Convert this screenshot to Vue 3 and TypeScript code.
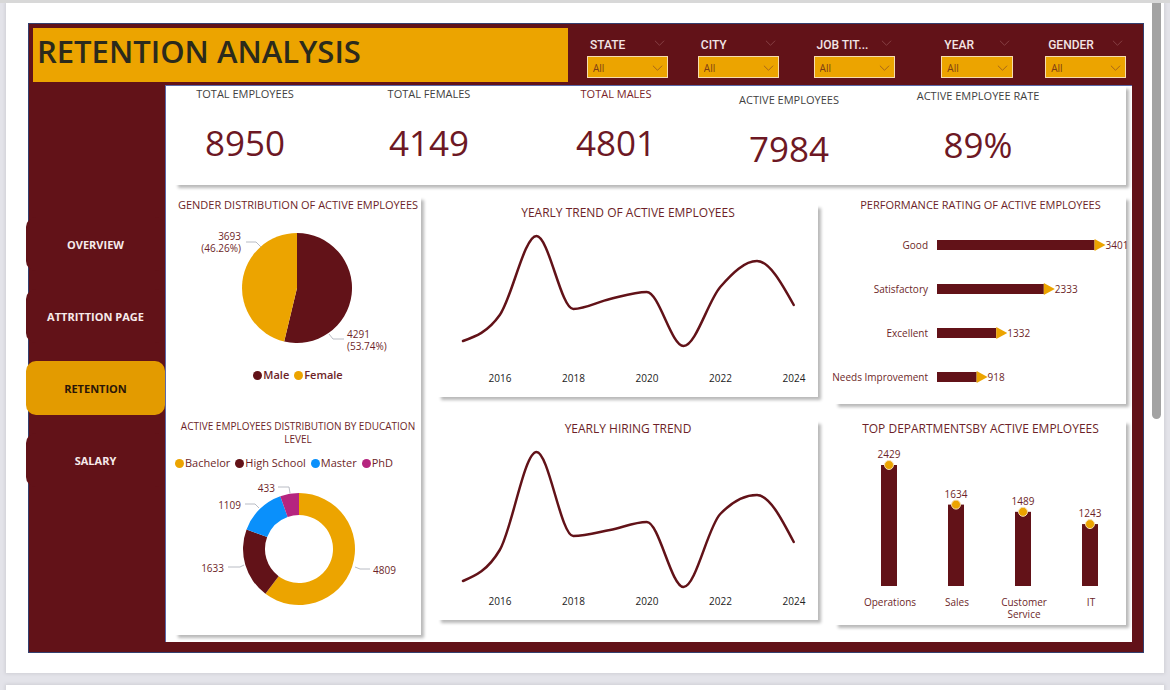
<script setup lang="ts">
import { ref } from 'vue'

interface Filter { id: string; label: string; narrow?: boolean }
interface Kpi { label: string; value: string; tone?: string; place?: string }
interface Slice { label: string; value: number; color: string }
interface Point { x: number; y: number }

const MAROON = '#621218'
const AMBER = '#eca400'

const filters: Filter[] = [
  { id: 'state', label: 'STATE' },
  { id: 'city', label: 'CITY' },
  { id: 'job', label: 'JOB TIT...' },
  { id: 'year', label: 'YEAR', narrow: true },
  { id: 'gender', label: 'GENDER' },
]

const pages = ['OVERVIEW', 'ATTRITTION PAGE', 'RETENTION', 'SALARY']
const current = ref('RETENTION')

const kpis: Kpi[] = [
  { label: 'TOTAL EMPLOYEES', value: '8950' },
  { label: 'TOTAL FEMALES', value: '4149' },
  { label: 'TOTAL MALES', value: '4801', tone: 'maroon' },
  { label: 'ACTIVE EMPLOYEES', value: '7984', place: 'low' },
  { label: 'ACTIVE EMPLOYEE RATE', value: '89%', place: 'lower' },
]

const genders: Slice[] = [
  { label: 'Male', value: 4291, color: MAROON },
  { label: 'Female', value: 3693, color: AMBER },
]

const education: Slice[] = [
  { label: 'Bachelor', value: 4809, color: AMBER },
  { label: 'High School', value: 1633, color: MAROON },
  { label: 'Master', value: 1109, color: '#0a90fb' },
  { label: 'PhD', value: 433, color: '#b5257f' },
]

function arcs(slices: Slice[], cx: number, cy: number, outer: number, inner: number) {
  const total = slices.reduce((sum, s) => sum + s.value, 0)
  let angle = 0
  const at = (r: number, a: number) =>
    `${(cx + r * Math.sin(a)).toFixed(2)} ${(cy - r * Math.cos(a)).toFixed(2)}`
  return slices.map((s) => {
    const from = angle
    const to = angle + (s.value / total) * Math.PI * 2
    angle = to
    const large = to - from > Math.PI ? 1 : 0
    const d = inner
      ? `M${at(outer, from)}A${outer} ${outer} 0 ${large} 1 ${at(outer, to)}L${at(inner, to)}A${inner} ${inner} 0 ${large} 0 ${at(inner, from)}Z`
      : `M${cx} ${cy}L${at(outer, from)}A${outer} ${outer} 0 ${large} 1 ${at(outer, to)}Z`
    return { d, color: s.color, label: s.label }
  })
}

const pieArcs = arcs(genders, 122, 75, 55, 0)
const donutArcs = arcs(education, 124, 78, 56, 34)

// Monotone cubic interpolation: smooth, with no overshoot between years.
function smooth(ys: number[]): string {
  const step = 36.75
  const pts: Point[] = ys.map((y, i) => ({ x: 25 + i * step, y }))
  const n = pts.length
  const slope = (i: number) => (pts[i + 1].y - pts[i].y) / step
  const tangents = pts.map((_, i) => {
    if (i === 0 || i === n - 1) return 0
    const a = slope(i - 1)
    const b = slope(i)
    return (Math.sign(a) + Math.sign(b)) * Math.min(Math.abs(a), Math.abs(b), 0.5 * Math.abs((a + b) / 2))
  })
  tangents[0] = (3 * slope(0) - tangents[1]) / 2
  tangents[n - 1] = (3 * slope(n - 2) - tangents[n - 2]) / 2
  let d = `M${pts[0].x} ${pts[0].y}`
  for (let i = 0; i < n - 1; i++) {
    const h = step / 3
    const p = pts[i]
    const q = pts[i + 1]
    d += `C${p.x + h} ${p.y + tangents[i] * h} ${q.x - h} ${q.y - tangents[i + 1] * h} ${q.x} ${q.y}`
  }
  return d
}

const trends = [
  {
    title: 'YEARLY TREND OF ACTIVE EMPLOYEES',
    height: 176,
    axis: 161,
    path: smooth([120, 94, 15, 88, 78, 71, 125, 66, 40, 84]),
  },
  {
    title: 'YEARLY HIRING TREND',
    height: 183,
    axis: 168,
    path: smooth([144, 113, 15, 99, 93, 85, 150, 77, 58, 105]),
  },
]
const years = [2016, 2018, 2020, 2022, 2024].map((year, i) => ({ year, x: 62 + i * 73.5 }))

const ratings = [
  { label: 'Good', value: 3401 },
  { label: 'Satisfactory', value: 2333 },
  { label: 'Excellent', value: 1332 },
  { label: 'Needs Improvement', value: 918 },
].map((r, i) => ({ ...r, y: 32 + i * 44, end: 102 + r.value * 0.0475 - 4 }))

const departments = [
  { lines: ['Operations'], value: 2429 },
  { lines: ['Sales'], value: 1634 },
  { lines: ['Customer', 'Service'], value: 1489 },
  { lines: ['IT'], value: 1243 },
].map((d, i) => ({ ...d, x: 54 + i * 67, top: 149 - (d.value / 2429) * 121 }))
</script>

<template>
  <div class="viewer">
    <div class="sheet">
      <main class="report">
        <header class="top">
          <h1>RETENTION ANALYSIS</h1>
          <div class="filters">
            <div v-for="f in filters" :key="f.id" class="filter" :class="{ narrow: f.narrow }">
              <div class="filter-head">
                <label :for="f.id">{{ f.label }}</label>
                <svg class="chev faint" viewBox="0 0 12 8" aria-hidden="true"><path d="M1 1.5L6 6.5L11 1.5" /></svg>
              </div>
              <div class="select">
                <select :id="f.id"><option>All</option></select>
                <svg class="chev" viewBox="0 0 12 8" aria-hidden="true"><path d="M1 1.5L6 6.5L11 1.5" /></svg>
              </div>
            </div>
          </div>
        </header>

        <nav class="side">
          <button
            v-for="p in pages"
            :key="p"
            type="button"
            :class="{ active: p === current }"
            @click="current = p"
          >{{ p }}</button>
        </nav>

        <div class="canvas">
          <section class="card kpis">
            <div v-for="k in kpis" :key="k.label" class="kpi" :class="[k.tone, k.place]">
              <span class="kpi-label">{{ k.label }}</span>
              <span class="kpi-value">{{ k.value }}</span>
            </div>
          </section>

          <div class="charts">
            <section class="card">
              <h2>GENDER DISTRIBUTION OF ACTIVE EMPLOYEES</h2>
              <svg viewBox="0 0 246 154">
                <path v-for="a in pieArcs" :key="a.label" :d="a.d" :fill="a.color" />
                <path class="leader" d="M71 29H81L86 34M154 121L158 126H169" />
                <g class="end">
                  <text x="66" y="27">3693</text>
                  <text x="66" y="39">(46.26%)</text>
                </g>
                <text x="172" y="125">4291</text>
                <text x="172" y="137">(53.74%)</text>
              </svg>
              <ul class="legend strong">
                <li v-for="g in genders" :key="g.label">
                  <svg viewBox="0 0 10 10" aria-hidden="true"><circle cx="5" cy="5" r="5" :fill="g.color" /></svg>{{ g.label }}
                </li>
              </ul>

              <h2 class="small">ACTIVE EMPLOYEES DISTRIBUTION BY EDUCATION LEVEL</h2>
              <ul class="legend from-left">
                <li v-for="e in education" :key="e.label">
                  <svg viewBox="0 0 10 10" aria-hidden="true"><circle cx="5" cy="5" r="5" :fill="e.color" /></svg>{{ e.label }}
                </li>
              </ul>
              <svg viewBox="0 0 246 164">
                <path v-for="a in donutArcs" :key="a.label" :d="a.d" :fill="a.color" />
                <path class="leader" d="M103 16H114L115 22M70 33H80L84 37M53 96H65L69 94M180 96L185 98H195" />
                <g class="end">
                  <text x="100" y="21">433</text>
                  <text x="66" y="38">1109</text>
                  <text x="49" y="101">1633</text>
                </g>
                <text x="198" y="103">4809</text>
              </svg>
            </section>

            <div class="column trends">
              <section v-for="t in trends" :key="t.title" class="card">
                <h2 class="large">{{ t.title }}</h2>
                <svg :viewBox="`0 0 380 ${t.height}`">
                  <path class="trend" :d="t.path" />
                  <g class="centered dark">
                    <text v-for="y in years" :key="y.year" :x="y.x" :y="t.axis">{{ y.year }}</text>
                  </g>
                </svg>
              </section>
            </div>

            <div class="column">
              <section class="card">
                <h2>PERFORMANCE RATING OF ACTIVE EMPLOYEES</h2>
                <svg viewBox="0 0 291 191">
                  <g v-for="r in ratings" :key="r.label">
                    <text class="end" x="93" :y="r.y + 4">{{ r.label }}</text>
                    <rect x="102" :y="r.y - 5" :width="r.end - 102" height="10" fill="#621218" />
                    <path :d="`M${r.end} ${r.y - 6}l11 6l-11 6z`" fill="#eca400" />
                    <text :x="r.end + 11" :y="r.y + 4">{{ r.value }}</text>
                  </g>
                </svg>
              </section>
              <section class="card">
                <h2 class="large">TOP DEPARTMENTSBY ACTIVE EMPLOYEES</h2>
                <svg viewBox="0 0 291 188">
                  <g v-for="d in departments" :key="d.value" class="centered">
                    <rect :x="d.x - 8" :y="d.top" width="16" :height="149 - d.top" fill="#621218" />
                    <circle :cx="d.x" :cy="d.top" r="4.5" fill="#eca400" stroke="#f6dfae" />
                    <text :x="d.x" :y="d.top - 7">{{ d.value }}</text>
                    <text v-for="(l, i) in d.lines" :key="l" :x="d.x + 1" :y="169 + i * 12">{{ l }}</text>
                  </g>
                </svg>
              </section>
            </div>
          </div>
        </div>
      </main>
    </div>
    <div class="sheet next"></div>
    <div class="thumb"></div>
  </div>
</template>

<style>
html,
body {
  margin: 0;
  background: #e3e3e9;
}
body {
  overflow: hidden;
}
</style>

<style scoped>
.viewer {
  position: relative;
  box-sizing: border-box;
  height: 100vh;
  overflow: hidden;
  padding: 0 6px;
  border-top: 3px solid #d8d8d8;
  font-family: "Trebuchet MS", "Open Sans", sans-serif;
  font-size: 11px;
  color: #6d1f28;
}
.sheet {
  box-sizing: border-box;
  padding: 20px 20px 20px 22px;
  background: #fff;
  box-shadow: 0 0 3px 1px #cfcfd6;
}
.next {
  height: 40px;
  margin-top: 12px;
}
.thumb {
  position: absolute;
  top: -3px;
  right: 9px;
  width: 9px;
  height: 419px;
  border-radius: 0 0 5px 5px;
  background: #a3a3a3;
}
.report {
  display: grid;
  grid-template-columns: 136px minmax(0, 1fr);
  padding: 0 11px 10px 0;
  border: 1px solid #33406f;
  background: #621218;
}
.top {
  grid-column: 1 / -1;
  display: grid;
  grid-template-columns: 536fr 557fr;
  column-gap: 19px;
  margin-right: -11px;
  padding: 4px 0 3px 4px;
}
h1 {
  margin: 0;
  padding-left: 4px;
  background: #eca400;
  color: #2b2a1c;
  font-size: 31px;
  font-weight: 600;
  line-height: 46px;
  height: 54px;
  white-space: nowrap;
}
.filters {
  display: grid;
  grid-template-columns: 111fr 116fr 128fr 104fr 98fr;
  padding-top: 9px;
}
.filter {
  width: 81px;
}
.narrow {
  width: 72px;
}
.filter-head {
  display: flex;
  align-items: center;
  justify-content: space-between;
  height: 16px;
  margin-bottom: 3px;
  padding: 0 3px;
  color: #f3e4e4;
  font-family: Roboto, sans-serif;
  font-size: 12px;
  font-weight: 500;
}
.filter-head .chev {
  margin-bottom: 4px;
}
.chev {
  width: 11px;
  height: 8px;
  fill: none;
  stroke: #a0601c;
}
.faint {
  stroke: #8a4448;
}
.select {
  position: relative;
  display: flex;
}
.select select {
  appearance: none;
  box-sizing: border-box;
  width: 100%;
  height: 22px;
  padding: 2px 5px 0;
  border: 1px solid #f6dcae;
  border-radius: 0;
  background: #eca400;
  color: #7c3d16;
  font-family: "Open Sans", sans-serif;
  font-size: 10px;
}
.select .chev {
  position: absolute;
  right: 5px;
  top: 8px;
  pointer-events: none;
}
.side {
  display: flex;
  flex-direction: column;
  gap: 18px;
  padding-top: 132px;
}
.side button {
  height: 54px;
  margin-left: -3px;
  border: 0;
  border-radius: 10px;
  background: #621218;
  color: #f7eaea;
  font: 700 11px "Trebuchet MS", "Open Sans", sans-serif;
}
.side .active {
  background: #e39b00;
  color: #2a1608;
}
.canvas {
  padding: 0 6px 7px 9px;
  border: 1px solid #5a68a8;
  border-width: 1px 0 0 1px;
  background: #fff;
}
.card {
  background: #fff;
  box-shadow: 3px 3px 3px rgba(0, 0, 0, 0.28);
}
.kpis {
  display: grid;
  grid-template-columns: 140fr 228fr 146fr 200fr 178fr 59fr;
  height: 99px;
}
.kpi {
  display: flex;
  flex-direction: column;
  align-items: center;
  white-space: nowrap;
}
.kpi-label {
  color: #3f3f3f;
  font-size: 11px;
  line-height: 15px;
}
.maroon .kpi-label {
  color: #7a1f2a;
}
.kpi-value {
  margin-top: 20px;
  color: #6d1824;
  font-size: 35px;
  line-height: 44px;
}
.low {
  padding-top: 6px;
}
.lower {
  padding-top: 2px;
}
.charts {
  display: grid;
  grid-template-columns: minmax(0, 246fr) minmax(0, 380fr) minmax(0, 291fr);
  column-gap: 17px;
  align-items: start;
  margin-top: 12px;
}
.column {
  display: grid;
  gap: 17px;
}
.trends {
  padding-top: 8px;
  gap: 24px;
}
.card svg {
  display: block;
  width: 100%;
  overflow: visible;
}
h2 {
  margin: 0;
  font-size: 11px;
  font-weight: 400;
  line-height: 16px;
  text-align: center;
  white-space: nowrap;
}
h2.large {
  font-size: 12px;
}
h2.small {
  margin: 37px 0 9px;
  padding: 0 4px;
  font-size: 10px;
  line-height: 13px;
  white-space: normal;
}
.legend {
  display: flex;
  justify-content: center;
  gap: 5px;
  margin: 0;
  padding: 0;
  list-style: none;
  font-size: 11px;
  line-height: 16px;
  white-space: nowrap;
}
.from-left {
  justify-content: flex-start;
}
.legend li {
  display: flex;
  align-items: center;
  gap: 1px;
}
.card .legend svg {
  width: 9px;
  height: 9px;
}
.strong {
  font-weight: 600;
}
text {
  fill: #6d1f28;
  font-size: 10px;
}
.end {
  text-anchor: end;
}
.centered {
  text-anchor: middle;
}
.dark text {
  fill: #222;
  font-weight: 500;
}
.leader {
  fill: none;
  stroke: #b9bcc4;
}
.trend {
  fill: none;
  stroke: #621218;
  stroke-width: 2.5;
  stroke-linecap: round;
}
</style>
